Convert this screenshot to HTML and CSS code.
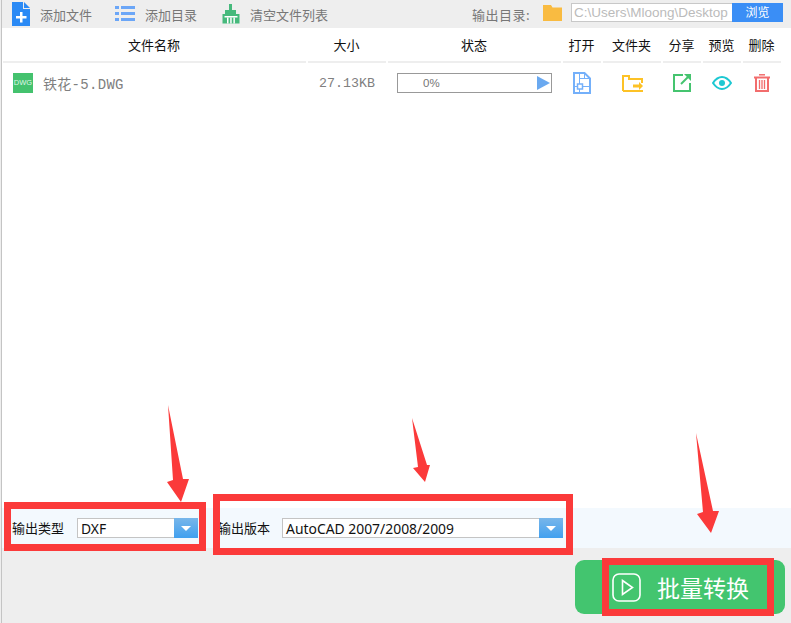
FILE: index.html
```html
<!DOCTYPE html>
<html lang="zh">
<head>
<meta charset="utf-8">
<title>批量转换</title>
<link rel="stylesheet" href="styles.css">
</head>
<body>
<div class="app">
  <header class="toolbar">
    <div class="tool tool-add">
      <svg class="ico" width="18" height="24" viewBox="0 0 18 24"><path fill="#2b8af5" d="M0 0H11V7H18V24H0Z"/><path fill="#2b8af5" d="M12 0L18 6H12Z"/><path fill="#fff" d="M8 10H10.500V14H14.500V16.500H10.500V20.500H8V16.500H4V14H8Z"/></svg>
      <span>添加文件</span>
    </div>
    <div class="tool tool-dir">
      <svg class="ico" width="20" height="16" viewBox="0 0 20 16"><g fill="#6ba6f7"><rect x="0" y="0" width="4" height="3"/><rect x="0" y="6" width="4" height="3"/><rect x="0" y="12" width="4" height="3"/><rect x="6" y="0" width="14" height="3"/><rect x="6" y="6" width="14" height="3"/><rect x="6" y="12" width="14" height="3"/></g></svg>
      <span>添加目录</span>
    </div>
    <div class="tool tool-clear">
      <svg class="ico" width="18" height="20" viewBox="0 0 18 20"><path fill="#46b97c" d="M7 0H10V6H7Z"/><path fill="#46b97c" d="M3 6H14V10H17.500V19.500H0.500V10H3Z"/><path fill="#fff" d="M2.500 12H15.500V13.500H2.500Z"/><path fill="#fff" d="M5 13.500H6.500V19.500H5ZM8.200 13.500H9.700V19.500H8.200ZM11.400 13.500H12.900V19.500H11.400Z"/></svg>
      <span>清空文件列表</span>
    </div>
    <div class="output">
      <span class="output-label">输出目录:</span>
      <svg class="output-folder" width="19" height="16" viewBox="0 0 19 16"><path fill="#f9bb41" d="M0 0H8L9.500 2.500H19V16H0Z"/></svg>
      <div class="path-box">
        <span class="path-text">C:\Users\Mloong\Desktop</span>
        <span class="browse">浏览</span>
      </div>
    </div>
  </header>

  <section class="list">
    <div class="cols head">
      <div class="hcell">文件名称</div>
      <div class="hcell">大小</div>
      <div class="hcell">状态</div>
      <div class="hcell">打开</div>
      <div class="hcell">文件夹</div>
      <div class="hcell">分享</div>
      <div class="hcell">预览</div>
      <div class="hcell">删除</div>
    </div>
    <div class="cols row">
      <div class="file">
        <span class="dwg">DWG</span>
        <span class="file-name">铁花-5.DWG</span>
      </div>
      <div class="size">27.13KB</div>
      <div class="status">
        <div class="progress">
          <span class="pct">0%</span>
          <span class="play"></span>
        </div>
      </div>
      <div class="act">
        <svg width="18" height="22" viewBox="0 0 18 22" fill="none" stroke="#74b0fa" stroke-width="2"><path d="M1 1H11.500L17 6.500V21H1Z"/><path stroke-width="1" d="M6.500 1V21M1 14.500H17M6.500 6.500H17M11.500 1V6.500"/><rect x="4.500" y="12" width="5" height="5" fill="#fff" stroke-width="1.500"/></svg>
      </div>
      <div class="act">
        <svg width="21" height="17" viewBox="0 0 21 17" fill="none" stroke="#fdc226" stroke-width="2"><path d="M1 16V1H7V4H20V8M1 16H20V15"/><path fill="#fdc226" stroke="none" d="M11 9.500H17V7L21 11L17 15V12.500H11Z"/></svg>
      </div>
      <div class="act">
        <svg width="18" height="18" viewBox="0 0 18 18" fill="none" stroke="#45c46f" stroke-width="2"><path d="M10 1H1V17H17V9"/><path stroke-width="2" d="M8 10L15.500 2.500"/><path fill="#45c46f" stroke="none" d="M11 0H18V7Z"/></svg>
      </div>
      <div class="act">
        <svg width="20" height="14" viewBox="0 0 20 14" fill="none" stroke="#1dc8d2" stroke-width="2"><path d="M1 7C4 2.500 7 1 10 1S16 2.500 19 7C16 11.500 13 13 10 13S4 11.500 1 7Z"/><circle cx="10" cy="7" r="3" fill="#1dc8d2" stroke="none"/></svg>
      </div>
      <div class="act">
        <svg width="16" height="18" viewBox="0 0 16 18" fill="none" stroke="#f26d6d"><path stroke-width="1.500" d="M5 .8H11"/><path stroke-width="2" d="M0 3.500H16"/><path stroke-width="2" d="M2 4V17H14V4"/><path stroke-width="1.300" d="M5.500 6V15M8 6V15M10.500 6V15"/></svg>
      </div>
    </div>
  </section>

  <div class="options">
    <span class="opt-label">输出类型</span>
    <div class="select select-type">
      <span class="select-text">DXF</span>
      <span class="select-btn"></span>
    </div>
    <span class="opt-label opt-label-2">输出版本</span>
    <div class="select select-ver">
      <span class="select-text">AutoCAD 2007/2008/2009</span>
      <span class="select-btn"></span>
    </div>
  </div>

  <footer class="footer">
    <button class="convert" type="button">
      <svg width="29" height="29" viewBox="0 0 29 29" fill="none" stroke="#fff" stroke-width="1.600"><rect x="1" y="1" width="27" height="27" rx="6"/><path d="M10.500 7.500L20.500 14.500L10.500 21.500Z"/></svg>
      <span>批量转换</span>
    </button>
  </footer>

  <div class="mark mark-type"></div>
  <div class="mark mark-ver"></div>
  <div class="mark mark-go"></div>
  <svg class="arrows" width="791" height="623" viewBox="0 0 791 623">
    <g fill="#fb3a3a">
      <path d="M168 405L183 479H189L181 502L167 482L173 480Z"/>
      <path d="M412 418L427 465H430L425 482L413 468L418 467Z"/>
      <path d="M696 433L713 511H719L711 533L697 514L703 512Z"/>
    </g>
  </svg>
</div>
</body>
</html>
```
FILE: styles.css
```css
* { box-sizing: border-box; }
html, body { margin: 0; padding: 0; }
body {
  width: 791px;
  height: 623px;
  overflow: hidden;
  background: #eeeeee;
  font-family: "Noto Sans CJK SC", "Liberation Sans", sans-serif;
  font-size: 13px;
  color: #111;
}
.app {
  position: relative;
  width: 790px;
  height: 623px;
  margin-left: 1px;
  display: flex;
  flex-direction: column;
  background: #fff;
  border-left: 1px solid #c4c4c4;
}
.toolbar {
  height: 28px;
  flex: none;
  display: flex;
  align-items: center;
  background: #eeeeee;
  color: #777;
}
.tool { display: flex; align-items: center; }
.tool .ico { flex: none; }
.tool-add { margin-left: 10px; }
.tool-add .ico { margin: 0 10px 0 0; }
.tool-dir { margin-left: 23px; }
.tool-dir .ico { margin-right: 10px; }
.tool-clear { margin-left: 25px; }
.tool-clear .ico { margin-right: 10px; }
.output {
  margin-left: auto;
  margin-right: 8px;
  display: flex;
  align-items: center;
}
.output-label { width: 71px; letter-spacing: .5px; }
.output-folder { margin: -2px 9px 0 0; }
.path-box {
  width: 212px;
  height: 19px;
  margin-top: -3px;
  display: flex;
  border: 1px solid #c8c8c8;
  border-right: 0;
  background: #fff;
}
.path-text {
  flex: 1;
  font-family: "Liberation Sans", sans-serif;
  font-size: 13.500px;
  line-height: 17px;
  padding-left: 2px;
  color: #bbb;
  white-space: nowrap;
  overflow: hidden;
}
.browse {
  flex: none;
  width: 51px;
  margin: -1px 0;
  background: #3a8ef6;
  color: #fff;
  font-size: 12px;
  line-height: 18px;
  text-align: center;
}
.list { flex: 1; padding-left: 1px; }
.cols {
  display: grid;
  grid-template-columns: 303px 78px 173px 38px 58px 38px 38px 38px;
  column-gap: 2px;
}
.head { height: 35px; }
.hcell {
  text-align: center;
  line-height: 33px;
  padding-right: 1px;
  border-bottom: 2px solid #eeeeee;
  color: #111;
}
.row { height: 40px; align-items: center; }
.file { display: flex; align-items: center; padding-left: 10px; }
.dwg {
  width: 20px;
  height: 20px;
  background: #44c26e;
  color: #dff5e6;
  font-family: "Liberation Sans", sans-serif;
  font-size: 7.500px;
  line-height: 20px;
  text-align: center;
}
.file-name {
  margin-left: 10px;
  font-family: "Liberation Mono", "Noto Sans CJK SC", monospace;
  font-size: 14px;
  letter-spacing: .3px;
  color: #808080;
}
.size {
  font-family: "Liberation Mono", monospace;
  font-size: 13.300px;
  color: #808080;
  padding-left: 11px;
}
.status { padding-left: 9px; }
.progress {
  position: relative;
  width: 155px;
  height: 20px;
  border: 1px solid #999;
}
.pct {
  position: absolute;
  left: 25px;
  top: 0;
  font-family: "Liberation Sans", sans-serif;
  font-size: 11.500px;
  line-height: 18px;
  color: #777;
}
.play {
  position: absolute;
  right: 1px;
  top: 2px;
  width: 0;
  height: 0;
  border-left: 13px solid #6aa9f0;
  border-top: 7px solid transparent;
  border-bottom: 7px solid transparent;
}
.act { display: flex; justify-content: center; align-items: center; }
.act svg { display: block; }
.options {
  height: 40px;
  flex: none;
  display: flex;
  align-items: center;
  background: #f3f9fe;
  padding-left: 10px;
  color: #111;
}
.opt-label { width: 65px; margin-top: -2px; }
.opt-label-2 { width: 64px; margin-left: 20px; }
.select {
  height: 20px;
  display: flex;
  border: 1px solid #c4c4c4;
  background: #fff;
}
.select-type { width: 121px; }
.select-ver { width: 281px; }
.select-text {
  flex: 1;
  font-family: "Noto Sans", sans-serif;
  font-size: 13.900px;
  line-height: 19px;
  padding-left: 3px;
  color: #111;
}
.select-btn {
  position: relative;
  width: 24px;
  margin: -1px -1px -1px 0;
  background: linear-gradient(#78b6ea, #41a0ef);
}
.select-btn::after {
  content: "";
  position: absolute;
  left: 7px;
  top: 8px;
  border-top: 5px solid #fff;
  border-left: 5px solid transparent;
  border-right: 5px solid transparent;
}
.footer {
  height: 75px;
  flex: none;
  display: flex;
  justify-content: flex-end;
  align-items: flex-start;
  padding: 12px 6px 0 0;
  background: #eeeeee;
}
.convert {
  width: 210px;
  height: 54px;
  display: flex;
  align-items: center;
  gap: 16px;
  padding: 0 0 0 37px;
  border: 0;
  border-radius: 9px;
  background: #43c56f;
  color: #fff;
  font-family: "Noto Sans CJK SC", sans-serif;
  font-size: 23px;
}
.convert svg { flex: none; }
.mark {
  position: absolute;
  border: 7px solid #fb3a3a;
}
.mark-type { left: 2px; top: 502px; width: 202px; height: 49px; }
.mark-ver { left: 211px; top: 494px; width: 360px; height: 61px; }
.mark-go { left: 600px; top: 558px; width: 172px; height: 58px; }
.arrows { position: absolute; left: -2px; top: 0; pointer-events: none; }
```
